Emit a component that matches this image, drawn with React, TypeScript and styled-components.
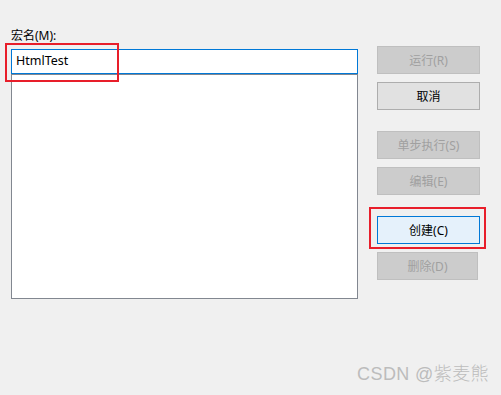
import React from 'react';
import styled, {createGlobalStyle} from 'styled-components';

const GlobalStyle = createGlobalStyle`
  html, body {
    margin: 0;
    padding: 0;
    background: #f0f0f0;
  }

  body {
    font-family: "Noto Sans", "Noto Sans CJK SC", sans-serif;
    font-size: 12px;
    color: #000;
  }
`;

const Dialog = styled.div`
  width: 501px;
  height: 395px;
  position: relative;
  overflow: hidden;
  background: #f0f0f0;

  display: flex;
  gap: 19px;
  padding: 28px 0 0 11px;
  box-sizing: border-box;
`;

const MacroPanel = styled.div`
  width: 347px;
  display: flex;
  flex-direction: column;
`;

const Label = styled.label`
  height: 21px;
  line-height: 16px;
`;

const NameField = styled.div`
  position: relative;
`;

const NameInput = styled.div`
  height: 25px;
  box-sizing: border-box;
  border: 1px solid #0078d7;
  background: #fff;
  padding: 0 4px;
  line-height: 22px;
  font-size: 12.5px;
`;

const MacroList = styled.div`
  height: 225px;
  box-sizing: border-box;
  border: 1px solid #828790;
  background: #fff;
`;

const ButtonColumn = styled.div`
  padding-top: 18px;
  display: flex;
  flex-direction: column;
`;

const ButtonSlot = styled.div<{$gap: number}>`
  position: relative;
  margin-bottom: ${p => p.$gap}px;
`;

type Variant = 'disabled' | 'normal' | 'focused';

const Button = styled.button<{$variant: Variant; $width?: number}>`
  width: ${p => p.$width ?? 103}px;
  height: 28px;
  box-sizing: border-box;
  padding: 0;
  font: inherit;
  font-size: 12px;
  display: flex;
  align-items: center;
  justify-content: center;

  border: 1px solid
    ${p => (p.$variant === 'disabled' ? '#bfbfbf' : p.$variant === 'focused' ? '#0078d7' : '#adadad')};
  background: ${p => (p.$variant === 'disabled' ? '#cccccc' : p.$variant === 'focused' ? '#e5f1fb' : '#e1e1e1')};
  color: ${p => (p.$variant === 'disabled' ? '#a0a0a0' : '#000')};
`;

const Highlight = styled.div<{$left: number; $top: number; $w: number; $h: number}>`
  position: absolute;
  left: ${p => p.$left}px;
  top: ${p => p.$top}px;
  width: ${p => p.$w}px;
  height: ${p => p.$h}px;
  box-sizing: border-box;
  border: 2px solid #e81e2a;
  pointer-events: none;
`;

const Watermark = styled.div`
  position: absolute;
  right: 12px;
  bottom: 10px;
  font-family: "Liberation Sans", "Noto Sans CJK SC", sans-serif;
  font-size: 18px;
  font-weight: 300;
  letter-spacing: 0.4px;
  color: #bcbcbc;
`;

const buttons: {label: string; variant: Variant; gap: number; width?: number; marked?: boolean}[] = [
  {label: '运行(R)', variant: 'disabled', gap: 8},
  {label: '取消', variant: 'normal', gap: 21},
  {label: '单步执行(S)', variant: 'disabled', gap: 8},
  {label: '编辑(E)', variant: 'disabled', gap: 21},
  {label: '创建(C)', variant: 'focused', gap: 8, marked: true},
  {label: '删除(D)', variant: 'disabled', gap: 0, width: 101},
];

export default function App() {
  return (
    <>
      <GlobalStyle />
      <Dialog>
        <MacroPanel>
          <Label>宏名(M):</Label>
          <NameField>
            <NameInput>HtmlTest</NameInput>
            <Highlight $left={-6} $top={-6} $w={114} $h={39} />
          </NameField>
          <MacroList />
        </MacroPanel>

        <ButtonColumn>
          {buttons.map(b => (
            <ButtonSlot key={b.label} $gap={b.gap}>
              <Button $variant={b.variant} $width={b.width}>
                {b.label}
              </Button>
              {b.marked && <Highlight $left={-8} $top={-9} $w={117} $h={42} />}
            </ButtonSlot>
          ))}
        </ButtonColumn>

        <Watermark>CSDN @紫麦熊</Watermark>
      </Dialog>
    </>
  );
}
